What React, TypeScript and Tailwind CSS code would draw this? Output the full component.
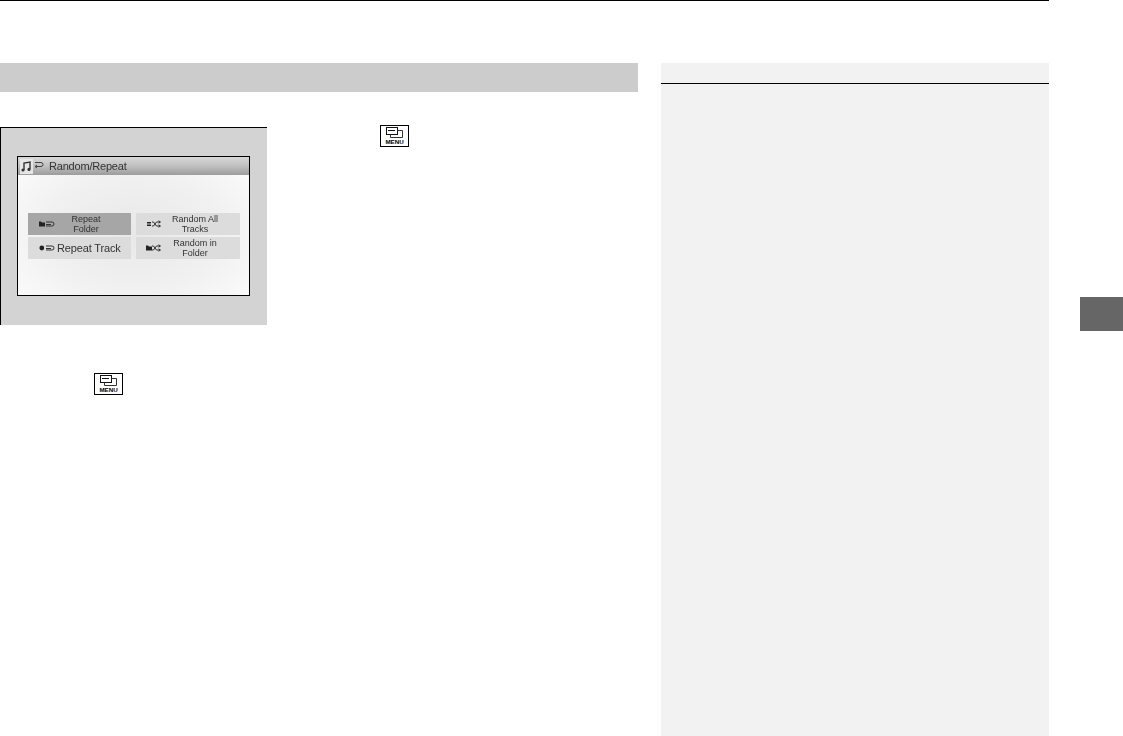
const font = "font-['Liberation_Sans',Arial,sans-serif]";

function MenuIcon() {
  return (
    <svg width="29" height="22" viewBox="0 0 29 22" className="block">
      <rect x="0.5" y="0.5" width="28" height="21" fill="#fff" stroke="#000" />
      <rect x="6.5" y="2.5" width="11" height="7" fill="#fff" stroke="#111" />
      <path d="M17.5 5.5h5v7h-12v-3" fill="none" stroke="#333" />
      <path d="M8 5.5h7" stroke="#111" />
      <text x="14.5" y="19" textAnchor="middle" fontSize="6.2" fontWeight="700" fontFamily="Liberation Sans, Arial, sans-serif" fill="#000">
        MENU
      </text>
    </svg>
  );
}

// little folder / track / list glyph + repeat or shuffle arrows used on the screen buttons
function ModeIcon({ kind }: { kind: "folder-repeat" | "track-repeat" | "all-random" | "folder-random" }) {
  const repeat = kind.endsWith("repeat");
  return (
    <svg width="16" height="8" viewBox="0 0 16 8" className="block blur-[0.3px]">
      {kind.startsWith("folder") && <path d="M0 1.5h2l1 1h3v4H0z" fill="#222" />}
      {kind === "track-repeat" && <circle cx="2.8" cy="4" r="2.4" fill="#222" />}
      {kind === "all-random" && <path d="M1 2.5h4M1 4h4M1 5.500h4" stroke="#222" strokeWidth="1" />}
      {repeat ? (
        <path d="M7 2h6a2 2 0 0 1 0 4H7M7 4.500h5" fill="none" stroke="#333" strokeWidth="1" />
      ) : (
        <path d="M6 2h1.500l3 4H14M6 6h1.500l3-4H14M12.500 .8l2 1.200-2 1.200M12.500 4.800l2 1.200-2 1.200" fill="none" stroke="#333" strokeWidth="1" />
      )}
    </svg>
  );
}

function ScreenButton({
  kind,
  lines,
  active,
  big,
  right,
}: {
  kind: "folder-repeat" | "track-repeat" | "all-random" | "folder-random";
  lines: string[];
  active?: boolean;
  big?: boolean;
  right?: boolean;
}) {
  return (
    <div className={`flex h-[22px] items-center ${active ? "bg-[#a6a6a6]" : "bg-[#dcdcdc]"} ${right ? "pl-[10px]" : "pl-[11px]"}`}>
      <div className={`shrink-0 ${big ? "w-[18px]" : "w-[16px]"}`}>
        <ModeIcon kind={kind} />
      </div>
      <div
        className={`text-center text-[#333] blur-[0.35px] ${
          big
            ? "text-[11px] leading-[22px] tracking-[-0.15px] whitespace-nowrap"
            : `${right ? "ml-[1px] w-[64px]" : "w-[62px]"} text-[9px] leading-[10px]`
        }`}
      >
        {lines.map((l) => (
          <div key={l}>{l}</div>
        ))}
      </div>
    </div>
  );
}

function Screen() {
  return (
    <div className="h-[140px] w-[233px] border border-black bg-[radial-gradient(ellipse_at_50%_55%,#e8e8e8_0%,#f1f1f1_55%,#fafafa_90%)]">
      <div className="flex h-[18px] items-center bg-gradient-to-b from-[#d8d8d8] via-[#c0c0c0] to-[#9c9c9c] pl-[2px]">
        <div className="flex h-[15px] w-[13px] items-center justify-center bg-[#e6e6e6] blur-[0.3px]">
          <svg width="11" height="11" viewBox="0 0 11 11">
            <path d="M3 9V2l6-1v7" fill="none" stroke="#333" strokeWidth="1.4" />
            <circle cx="2" cy="9" r="1.6" fill="#333" />
            <circle cx="8" cy="8.400" r="1.6" fill="#333" />
          </svg>
        </div>
        <svg width="10" height="8" viewBox="0 0 10 8" className="ml-[1px] mb-[3px] blur-[0.3px]">
          <path d="M1 1.500h6a2 2 0 0 1 0 4H1M3 4l-2 1.500L3 7" fill="none" stroke="#444" strokeWidth="1" />
        </svg>
        <span className="ml-[5px] text-[11px] tracking-[-0.2px] text-[#333] blur-[0.35px]">Random/Repeat</span>
      </div>
      <div className="mt-[38px] ml-[10px] grid w-[212px] grid-cols-[103px_104px] gap-x-[5px] gap-y-[2px]">
        <ScreenButton kind="folder-repeat" lines={["Repeat", "Folder"]} active />
        <ScreenButton kind="all-random" lines={["Random All", "Tracks"]} right />
        <ScreenButton kind="track-repeat" lines={["Repeat Track"]} big />
        <ScreenButton kind="folder-random" lines={["Random in", "Folder"]} right />
      </div>
    </div>
  );
}

export default function App() {
  return (
    <div className={`h-[736px] w-[1123px] overflow-hidden bg-white ${font}`}>
      <div className="h-px w-[1049px] bg-black" />
      <div className="flex pt-[62px]">
        <main className="w-[638px] shrink-0">
          <div className="h-[29px] bg-[#cccccc]" />
          <div className="mt-[35px] flex">
            <div className="flex h-[198px] w-[267px] items-start border-t border-l border-black bg-[#d3d3d3] pt-[28px] pl-[16px]">
              <Screen />
            </div>
            <div className="ml-[113px] mt-[-2px]">
              <MenuIcon />
            </div>
          </div>
          <div className="mt-[48px] ml-[94px]">
            <MenuIcon />
          </div>
        </main>
        <aside className="ml-[23px] h-[673px] w-[388px] shrink-0 bg-[#f2f2f2] pt-[20px]">
          <div className="h-px bg-black" />
        </aside>
        <div className="mt-[234px] ml-[31px] h-[34px] w-[43px] shrink-0 bg-[#666666]" />
      </div>
    </div>
  );
}
